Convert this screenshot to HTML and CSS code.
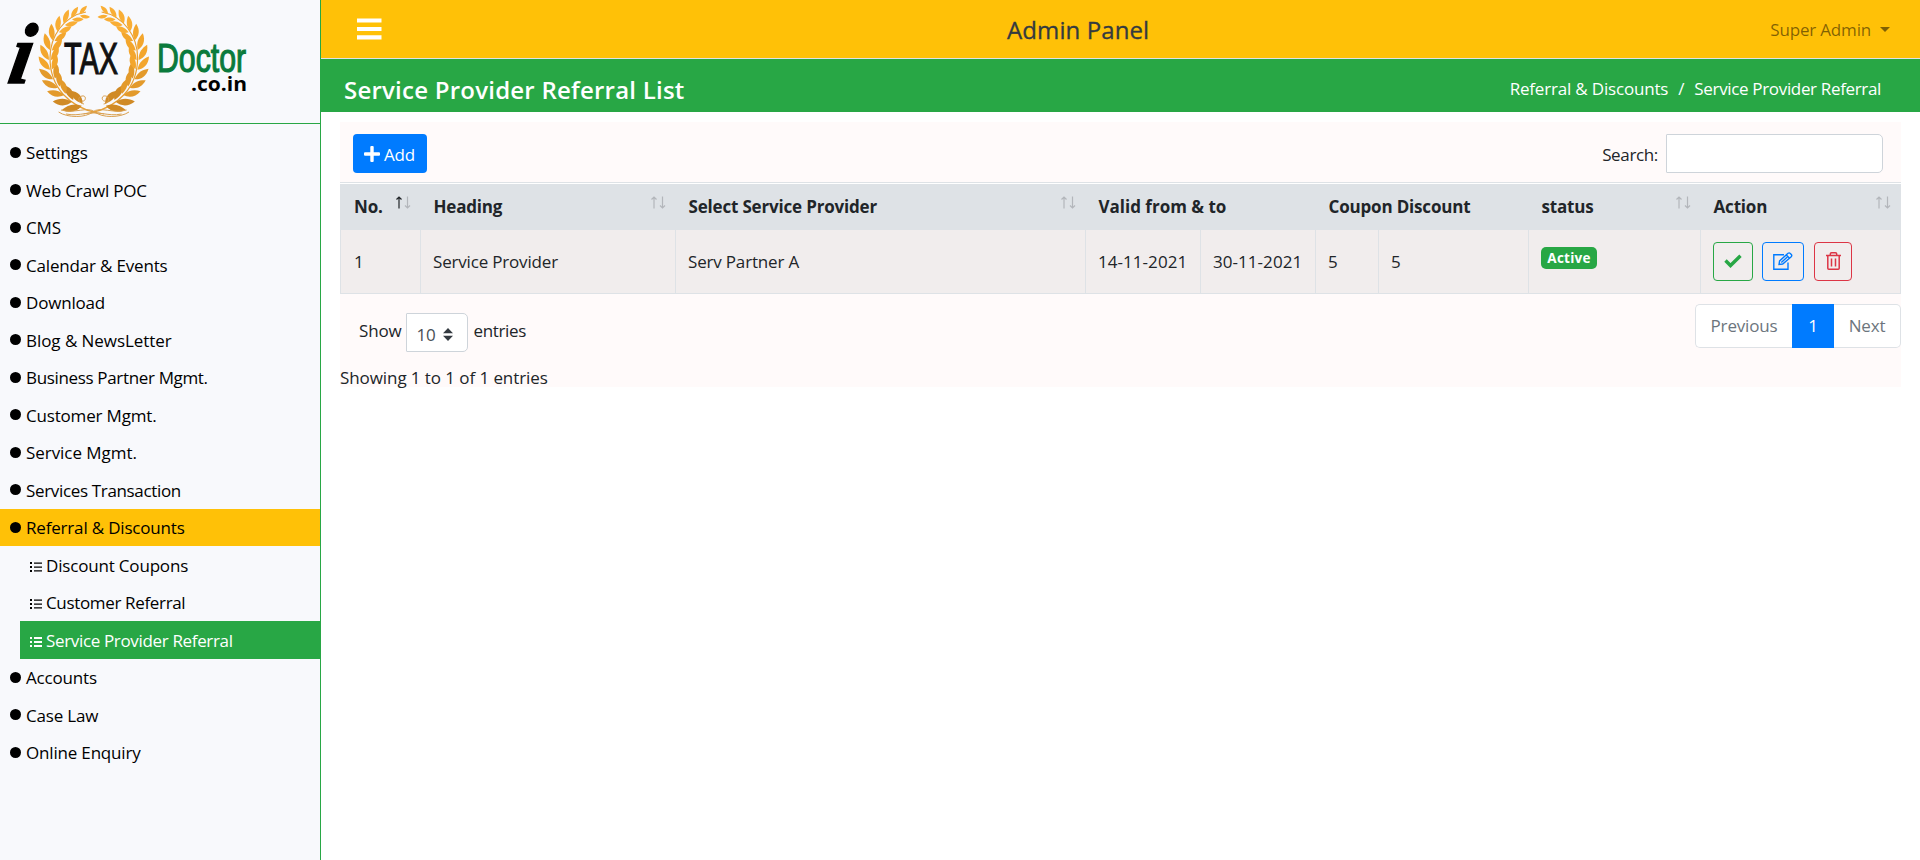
FILE: index.html
```html
<!DOCTYPE html>
<html lang="en">
<head>
<meta charset="utf-8">
<title>Service Provider Referral List</title>
<link rel="stylesheet" href="styles.css">
</head>
<body>
<div class="app">
  <aside class="sidebar">
    <div class="brand">
      <svg class="logo" width="260" height="122" viewBox="0 0 260 122" aria-label="iTaxDoctor.co.in">
        <defs>
          <g id="leaf">
            <path d="M-1 2C-7 0-11-5-10-13C-5-10-1-6-1 2Z"/>
            <path d="M1 2C7 0 10-5 8-12C4-9 1-6 1 2Z"/>
          </g>
          <g id="branch">
            <path d="M97 113C70 107 50 88 50 58C50 36 64 16 86 12" fill="none" stroke="#e9a033" stroke-width="1.2"/>
            <g fill="#d08a25"><use href="#leaf" transform="translate(80 104) rotate(-70) scale(1.150)"/><use href="#leaf" transform="translate(70.7 99.7) rotate(-58) scale(1.100)"/></g>
            <g fill="#e39a2b"><use href="#leaf" transform="translate(63.4 93) rotate(-46)"/><use href="#leaf" transform="translate(57.5 85.5) rotate(-34)"/><use href="#leaf" transform="translate(53.2 77) rotate(-22)"/></g>
            <g fill="#f3a62d"><use href="#leaf" transform="translate(50.7 67.5) rotate(-10)"/><use href="#leaf" transform="translate(50 58) rotate(2)"/><use href="#leaf" transform="translate(51.3 48.4) rotate(14)"/><use href="#leaf" transform="translate(54.5 39) rotate(26) scale(.95)"/></g>
            <g fill="#f9ae35"><use href="#leaf" transform="translate(59.3 30.4) rotate(38) scale(.9)"/><use href="#leaf" transform="translate(65.7 23.2) rotate(50) scale(.85)"/><use href="#leaf" transform="translate(73 18) rotate(62) scale(.75)"/><use href="#leaf" transform="translate(81 14.500) rotate(72) scale(.65)"/></g>
            <path d="M61 110C74 114 88 106 95 112S120 118 129 112M66 114C80 117 90 110 104 114M84 104C78 103 77 97 82 96S86 102 82 101" fill="none" stroke="#d9a050" stroke-width="1"/>
          </g>
        </defs>
        <use href="#branch"/>
        <use href="#branch" transform="translate(187.6 0) scale(-1 1)"/>
        <text class="logo-i" x="6" y="83" textLength="23" lengthAdjust="spacingAndGlyphs" transform="translate(14.600 0) skewX(-10)">i</text>
        <text class="logo-tax" x="64" y="74" textLength="54" lengthAdjust="spacingAndGlyphs">TAX</text>
        <text class="logo-doctor" x="157" y="72" textLength="89" lengthAdjust="spacingAndGlyphs">Doctor</text>
        <text class="logo-domain" x="191" y="91" textLength="56" lengthAdjust="spacingAndGlyphs">.co.in</text>
      </svg>
    </div>
    <nav class="menu">
      <a class="item"><i class="dot"></i>Settings</a>
      <a class="item"><i class="dot"></i>Web Crawl POC</a>
      <a class="item"><i class="dot"></i>CMS</a>
      <a class="item"><i class="dot"></i>Calendar &amp; Events</a>
      <a class="item"><i class="dot"></i>Download</a>
      <a class="item loose"><i class="dot"></i>Blog &amp; NewsLetter</a>
      <a class="item tight"><i class="dot"></i>Business Partner Mgmt.</a>
      <a class="item"><i class="dot"></i>Customer Mgmt.</a>
      <a class="item loose"><i class="dot"></i>Service Mgmt.</a>
      <a class="item tight"><i class="dot"></i>Services Transaction</a>
      <a class="item open"><i class="dot"></i>Referral &amp; Discounts</a>
      <div class="submenu">
        <a class="item"><svg class="list" width="12" height="10" viewBox="0 0 12 10"><path d="M0 0h2v2H0zM4 .5h8v1.2H4zM0 4h2v2H0zM4 4.5h8v1.2H4zM0 8h2v2H0zM4 8.3h8v1.2H4z"/></svg>Discount Coupons</a>
        <a class="item tight"><svg class="list" width="12" height="10" viewBox="0 0 12 10"><path d="M0 0h2v2H0zM4 .5h8v1.2H4zM0 4h2v2H0zM4 4.5h8v1.2H4zM0 8h2v2H0zM4 8.3h8v1.2H4z"/></svg>Customer Referral</a>
        <a class="item tight current"><svg class="list" width="12" height="10" viewBox="0 0 12 10"><path d="M0 0h2v2H0zM4 0h8v2H4zM0 4h2v2H0zM4 4h8v2H4zM0 8h2v2H0zM4 8h8v2H4z"/></svg>Service Provider Referral</a>
      </div>
      <a class="item"><i class="dot"></i>Accounts</a>
      <a class="item"><i class="dot"></i>Case Law</a>
      <a class="item"><i class="dot"></i>Online Enquiry</a>
    </nav>
  </aside>

  <main class="main">
    <header class="topbar">
      <svg class="burger" width="25" height="22" viewBox="0 0 25 22"><path d="M0 .4h24.5v4.2H0zM0 9h24.5v4H0zM0 17.3h24.5v4.2H0z" fill="#fff"/></svg>
      <h1 class="panel-title">Admin Panel</h1>
      <span class="user">Super Admin<i class="caret"></i></span>
    </header>
    <div class="pagebar">
      <h2 class="page-title">Service Provider Referral List</h2>
      <div class="crumbs"><span>Referral &amp; Discounts</span><span class="slash">/</span><span class="tight">Service Provider Referral</span></div>
    </div>

    <section class="panel">
      <div class="toolbar">
        <button class="add"><svg width="16" height="16" viewBox="0 0 16 16"><path d="M6.3 1a1 1 0 0 1 1-1h1.4a1 1 0 0 1 1 1v5.3H15a1 1 0 0 1 1 1v1.4a1 1 0 0 1-1 1H9.700V15a1 1 0 0 1-1 1H7.300a1 1 0 0 1-1-1V9.700H1a1 1 0 0 1-1-1V7.300a1 1 0 0 1 1-1h5.300z" fill="#fff"/></svg><span>Add</span></button>
        <label class="search"><span>Search:</span><input type="text"></label>
      </div>
      <table class="grid">
        <colgroup><col class="c1"><col class="c2"><col class="c3"><col class="c4"><col class="c4"><col class="c5"><col class="c6"><col class="c7"><col class="c8"></colgroup>
        <thead>
          <tr>
            <th><div class="th">No.<svg class="sort asc" width="15" height="13" viewBox="0 0 15 13"><path class="up" d="M3 12.500V1M.5 3.500L3 1l2.500 2.500"/><path class="down" d="M11.500.5V12M9 9.500l2.500 2.500L14 9.500"/></svg></div></th>
            <th><div class="th">Heading<svg class="sort" width="15" height="13" viewBox="0 0 15 13"><path class="up" d="M3 12.500V1M.5 3.500L3 1l2.500 2.500"/><path class="down" d="M11.500.5V12M9 9.500l2.500 2.500L14 9.500"/></svg></div></th>
            <th><div class="th">Select Service Provider<svg class="sort" width="15" height="13" viewBox="0 0 15 13"><path class="up" d="M3 12.500V1M.5 3.500L3 1l2.500 2.500"/><path class="down" d="M11.500.5V12M9 9.500l2.500 2.500L14 9.500"/></svg></div></th>
            <th colspan="2"><div class="th wide">Valid from &amp; to</div></th>
            <th colspan="2"><div class="th">Coupon Discount</div></th>
            <th><div class="th">status<svg class="sort" width="15" height="13" viewBox="0 0 15 13"><path class="up" d="M3 12.500V1M.5 3.500L3 1l2.500 2.500"/><path class="down" d="M11.500.5V12M9 9.500l2.500 2.500L14 9.500"/></svg></div></th>
            <th><div class="th">Action<svg class="sort" width="15" height="13" viewBox="0 0 15 13"><path class="up" d="M3 12.500V1M.5 3.500L3 1l2.500 2.500"/><path class="down" d="M11.500.5V12M9 9.500l2.500 2.500L14 9.500"/></svg></div></th>
          </tr>
        </thead>
        <tbody>
          <tr>
            <td>1</td><td>Service Provider</td><td>Serv Partner A</td>
            <td class="date">14-11-2021</td><td class="date">30-11-2021</td><td>5</td><td>5</td>
            <td><span class="badge">Active</span></td>
            <td><div class="actions">
              <button class="act ok"><svg width="18" height="14" viewBox="0 0 18 14"><path d="M1.500 6.500l5 5L16.500 1.800" fill="none" stroke="currentColor" stroke-width="3.400"/></svg></button>
              <button class="act edit"><svg width="20" height="18" viewBox="0 0 20 18"><g fill="none" stroke="currentColor" stroke-width="1.400"><path d="M11 2.700H.8v14.500H15V10.500"/><path d="M6 12.500l.6-3.600L15 1.300q1.200-.9 2.300.1l1 1q1 1.100-.1 2.300L9.700 12z"/><path d="M13.300 3l3.300 3.300M8.300 10.500l6-5.500"/></g></svg></button>
              <button class="act del"><svg width="15" height="18" viewBox="0 0 15 18"><path d="M0 3.500h15M4.300 3.500V2q0-1.200 1.200-1.200h4q1.200 0 1.200 1.200v1.500M1.800 3.500v12.700q0 1 1 1h9.400q1 0 1-1V3.500M5.500 6.500v8M9.500 6.500v8" fill="none" stroke="currentColor" stroke-width="1.500"/></svg></button>
            </div></td>
          </tr>
        </tbody>
      </table>
      <div class="footer">
        <div class="length"><span>Show</span><span class="select">10<svg width="10" height="13" viewBox="0 0 10 13"><path d="M5 0l5 5.300H0zM5 13l5-5.300H0z" fill="#343a40"/></svg></span><span class="tight">entries</span></div>
        <div class="pager"><span class="prev">Previous</span><span class="cur">1</span><span class="next">Next</span></div>
      </div>
      <div class="info">Showing 1 to 1 of 1 entries</div>
    </section>
  </main>
</div>
</body>
</html>
```

FILE: styles.css
```css
* { box-sizing: border-box; }
body {
  margin: 0;
  background: #fff;
  color: #212529;
  font-family: "Open Sans", "Noto Sans", sans-serif;
  font-size: 17px;
  line-height: 27px;
  letter-spacing: -0.18px;
  white-space: nowrap;
}
.app { display: flex; height: 860px; overflow: hidden; }
.tight { letter-spacing: -0.34px; }
.loose { letter-spacing: -0.05px; }

/* Sidebar */
.sidebar { width: 321px; flex: none; background: #f8f9fc; border-right: 1px solid #28a745; }
.brand { height: 124px; border-bottom: 1px solid #28a745; }
.logo { display: block; overflow: visible; }
.logo-i { font: italic bold 86px "Liberation Serif", serif; letter-spacing: 0; stroke: #000; stroke-width: 1.5; }
.logo-tax { font: 44px "Liberation Sans", sans-serif; letter-spacing: 0; fill: #111; stroke: #111; stroke-width: 1.2; }
.logo-doctor { font: 41px "Liberation Sans", sans-serif; letter-spacing: 0; fill: #0a7a3c; stroke: #0a7a3c; stroke-width: 1.2; }
.logo-domain { font: bold 20px "Open Sans", sans-serif; letter-spacing: 0; }
.menu { padding-top: 9.75px; color: #000; }
.item { display: flex; align-items: center; height: 37.5px; padding-left: 10px; }
.dot { width: 11px; height: 11px; margin: 0 5px 1px 0; border-radius: 50%; background: #000; }
.open { background: #ffc107; }
.submenu { padding-left: 20px; }
.list { margin: 3px 4px 0 0; fill: currentColor; }
.current { background: #28a745; color: #fff; }

/* Header bars */
.main { flex: 1; min-width: 0; }
.topbar {
  display: flex; align-items: center; height: 59px; padding: 0 30px 0 36px;
  background: #ffc107; border-bottom: 1px solid #dee2e6;
}
.panel-title { margin: 1px 0 0 625px; font-size: 24px; font-weight: 500; color: #343a40; letter-spacing: .1px; -webkit-text-stroke: .3px #343a40; }
.user { display: flex; align-items: center; margin: 1px 0 0 auto; color: rgba(0, 0, 0, .5); }
.caret { margin-left: 9px; border: 5.5px solid transparent; border-top-color: currentColor; border-bottom: 0; }
.pagebar {
  display: flex; align-items: center; justify-content: space-between; height: 53px;
  padding: 6px 39px 0 23px; background: #28a745; color: #fff;
}
.page-title { margin: 2px 0 0; font-size: 24px; font-weight: 600; letter-spacing: .23px; }
.crumbs { display: flex; }
.slash { margin: 0 10px; }

/* Listing */
.panel { width: 1561px; height: 265px; margin: 10px 0 0 19px; background: #fffafa; }
.toolbar { display: flex; justify-content: space-between; height: 60px; padding: 12px 18px 0 13px; }
.add {
  display: flex; align-items: center; gap: 4px; width: 74px; height: 39px; padding: 1px 0 0 11px;
  border: 0; border-radius: 4px; background: #007bff; color: #fff; font: inherit; letter-spacing: inherit;
}
.search { display: flex; align-items: center; gap: 8px; height: 39px; letter-spacing: -0.35px; }
.search span { padding-top: 1px; }
.search input { width: 217px; height: 39px; border: 1px solid #ced4da; border-radius: 1px 5px 5px 1px; background: #fff; }
.grid { width: 1561px; table-layout: fixed; border-collapse: separate; border-spacing: 0; border-top: 1px solid #dee2e6; }
.c1 { width: 81px; } .c2 { width: 255px; } .c3 { width: 410px; } .c4 { width: 115px; }
.c5 { width: 63px; } .c6 { width: 150px; } .c7 { width: 172px; } .c8 { width: 200px; }
.grid th { height: 47px; padding: 0 10px 2px 12.5px; border-top: 1px solid #fff; background: #dee2e6; text-align: left; font-weight: 700; }
.grid th:first-child { padding: 0 10px 2px 14px; }
.th { display: flex; align-items: center; justify-content: space-between; padding-top: 1px; }
.wide { letter-spacing: 0; }
.sort { margin: 0 0 8px; fill: none; stroke: #b3b6bb; stroke-width: 1.2; }
.asc .up { stroke: #212529; }
.grid td { height: 64px; padding: 0 0 1px 12px; border-right: 1px solid #dee2e6; border-bottom: 1px solid #dee2e6; background: #f1eded; }
.grid td:first-child { padding-left: 13px; border-left: 1px solid #dee2e6; }
.grid .date { letter-spacing: .05px; }
.badge {
  display: block; width: 56px; height: 22px; margin-bottom: 7px; border-radius: 5px;
  background: #28a745; color: #fff; font-size: 13.5px; font-weight: 700; line-height: 23px; text-align: center; letter-spacing: .25px;
}
.actions { display: flex; gap: 9px; }
.act { display: flex; align-items: center; justify-content: center; height: 39px; padding: 0; border: 1px solid; border-radius: 4px; background: none; }
.ok { width: 40px; color: #28a745; }
.edit { width: 42px; color: #007bff; }
.del { width: 38px; margin-left: 1px; color: #dc3545; }
.footer { display: flex; justify-content: space-between; height: 71px; padding: 10px 0 0 19px; }
.length { display: flex; height: 54px; align-items: center; padding-bottom: 1px; }
.select {
  display: flex; align-items: center; gap: 7px; width: 62px; height: 39px; margin: 4px 5px 0 5px; padding: 3px 0 0 9px;
  border: 1px solid #ced4da; border-radius: 1px 5px 5px 1px; background: #fff; color: #495057;
}
.pager { display: flex; height: 44px; text-align: center; color: #6c757d; }
.prev { width: 97px; border: 1px solid #dee2e6; border-right: 0; border-radius: 5px 0 0 5px; background: #fff; }
.cur { width: 42px; background: #007bff; color: #fff; line-height: 44px; }
.next { width: 67px; border: 1px solid #dee2e6; border-left: 0; border-radius: 0 5px 5px 0; background: #fff; }
.prev, .next { line-height: 42px; }
.info { line-height: 25px; letter-spacing: -0.08px; }
```
